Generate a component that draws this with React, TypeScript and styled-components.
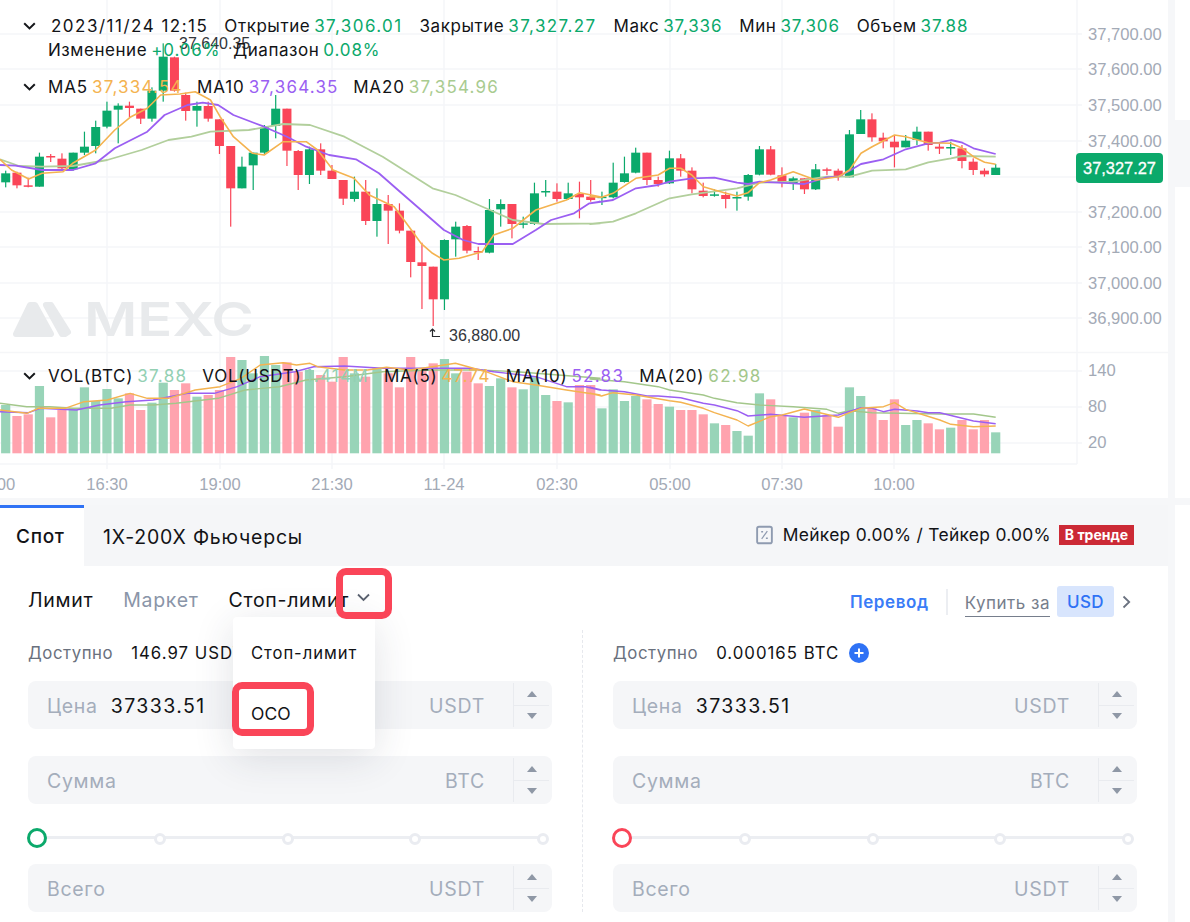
import React from 'react';
import styled, { createGlobalStyle } from 'styled-components';

const GREEN = '#0ba96b';
const RED = '#fa4558';
const MA5 = '#f4b350';
const MA10 = '#9b5ff2';
const MA20 = '#b2cf9c';

const GlobalStyle = createGlobalStyle`
  html, body { margin: 0; padding: 0; background: #fff; }
  body { font-family: Inter, "Noto Sans", "Liberation Sans", sans-serif; color: #121316; }
  * { box-sizing: border-box; }
`;

const Page = styled.div`
  width: 1190px;
  height: 922px;
  overflow: hidden;
  background: #fff;
  display: flex;
  flex-direction: column;
`;
const Band = styled.div`
  display: flex;
  height: ${(p: { $h: number }) => p.$h}px;
`;
const Strip = styled.div`
  height: 7px;
  flex: none;
  background: #f6f7f9;
`;
const Gutter = styled.div`
  width: 7px;
  flex: none;
  background: #f6f7f9;
`;
const SideBook = styled.div`
  flex: 1;
  padding-top: ${(p: { $top: number }) => p.$top}px;
`;
const SideRow = styled.div`
  height: 67px;
  background: #f6f7f9;
`;
const ChartPane = styled.div`
  width: 1168px;
  height: 498px;
  position: relative;
  overflow: hidden;
`;
const ChartSvg = styled.svg`
  display: block;
  width: 1168px;
  height: 498px;
`;
const AxisText = styled.text`
  font-family: "Liberation Sans", Arial, sans-serif;
  font-size: 16.6px;
  fill: #a3aab6;
  dominant-baseline: central;
`;
const MarkText = styled.text`
  font-family: "Liberation Sans", Arial, sans-serif;
  font-size: 16px;
  fill: #33363b;
  dominant-baseline: central;
`;
const WatermarkText = styled.text`
  font-family: Inter, "Liberation Sans", sans-serif;
  font-size: 47px;
  font-weight: 600;
  fill: #e8eaec;
`;
const LegendItem = styled.span`
  display: inline-flex;
  gap: 4px;
`;
const Legend = styled.div<{ $x: number; $y: number; $gap: number; $ls: number }>`
  position: absolute;
  display: flex;
  align-items: center;
  white-space: nowrap;
  font-size: 17px;
  letter-spacing: ${(p) => p.$ls}px;
  line-height: 24px;
  height: 24px;
  left: ${(p) => p.$x}px;
  top: ${(p) => p.$y}px;
  ${LegendItem} { margin-right: ${(p) => p.$gap}px; }
`;
const LegendDate = styled.span`
  margin: 0 16px 0 3px;
  letter-spacing: 1.5px;
`;
const LegendValue = styled.span<{ $c: string; $ls: number }>`
  color: ${(p) => p.$c};
  letter-spacing: ${(p) => p.$ls}px;
`;
const ChevronBox = styled.svg`
  width: 13px;
  height: 8px;
  margin-right: 12px;
  flex: none;
`;
const PriceTag = styled.div`
  position: absolute;
  left: 1076px;
  top: 153px;
  width: 87px;
  height: 30px;
  border-radius: 4px;
  background: ${GREEN};
  color: #fff;
  font-family: "Liberation Sans", Arial, sans-serif;
  font-size: 16.4px;
  -webkit-text-stroke: 0.3px #fff;
  display: flex;
  align-items: center;
  justify-content: center;
`;

const TradePane = styled.div`
  width: 1168px;
  position: relative;
  display: flex;
  flex-direction: column;
`;
const TabsBar = styled.div`
  height: 61px;
  flex: none;
  display: flex;
  align-items: center;
  background: #f5f6f8;
  padding-right: 34px;
`;
const ActiveTab = styled.div`
  width: 84px;
  height: 61px;
  background: #fff;
  border-top: 3px solid #2f72f5;
  font-size: 19px;
  font-weight: 500;
  letter-spacing: 0.7px;
  display: flex;
  align-items: center;
  padding-left: 16px;
  padding-bottom: 2px;
`;
const Tab = styled.div`
  margin-left: 19px;
  padding-top: 3px;
  font-size: 19.5px;
  letter-spacing: 0.8px;
`;
const FeeBox = styled.div`
  margin-left: auto;
  display: flex;
  align-items: center;
  font-size: 17.4px;
  letter-spacing: 0.3px;
  padding-bottom: 2px;
`;
const FeeIcon = styled.svg`
  width: 17px;
  height: 20px;
  margin-right: 10px;
`;
const TrendBadge = styled.span`
  margin-left: 8px;
  width: 75px;
  height: 20px;
  background: #cc2a36;
  color: #fff;
  font-size: 14px;
  font-weight: 700;
  letter-spacing: 0;
  display: flex;
  align-items: center;
  justify-content: center;
`;
const OrderRow = styled.div`
  height: 68px;
  flex: none;
  display: flex;
  align-items: center;
  padding: 0 37px 0 28px;
`;
const OrderType = styled.span<{ $dim?: boolean }>`
  font-size: 19.5px;
  letter-spacing: 0.7px;
  margin-right: 30px;
  color: ${(p) => (p.$dim ? '#8a95a8' : '#121316')};
`;
const DownIcon = styled.svg`
  width: 15px;
  height: 9px;
  margin-left: -23px;
  margin-bottom: 6px;
  color: #5b6270;
  position: relative;
`;
const RightTools = styled.div`
  margin-left: auto;
  margin-top: 3px;
  display: flex;
  align-items: center;
`;
const TransferLink = styled.span`
  color: #3a7cf7;
  font-size: 17px;
  font-weight: 600;
  letter-spacing: 0.6px;
  padding-right: 17px;
  border-right: 2px solid #eceef2;
  line-height: 26px;
  margin-right: 17px;
`;
const BuyFor = styled.span`
  color: #767e8c;
  font-size: 17px;
  letter-spacing: 0.5px;
  line-height: 26px;
  border-bottom: 1px solid #767e8c;
  margin-right: 7px;
  margin-top: 3px;
`;
const UsdChip = styled.span`
  width: 57px;
  height: 31px;
  background: #d8e5fd;
  color: #2f72f5;
  font-size: 17px;
  font-weight: 500;
  letter-spacing: 0.4px;
  border-radius: 3px;
  display: flex;
  align-items: center;
  justify-content: center;
`;
const RightIcon = styled.svg`
  width: 9px;
  height: 14px;
  margin-left: 8px;
  color: #6b7280;
`;
const FormGrid = styled.div`
  display: grid;
  grid-template-columns: 524px 61px 524px;
  padding-left: 28px;
`;
const Divider = styled.div`
  margin-left: 30px;
  margin-top: -4px;
  border-left: 1px dashed #e6e8ed;
`;
const BalanceRow = styled.div`
  height: 36px;
  padding-top: 1px;
  margin-bottom: 11px;
  display: flex;
  align-items: center;
  font-size: 16.8px;
  letter-spacing: 0.55px;
  white-space: nowrap;
`;
const BalanceLabel = styled.span`
  color: #6a717e;
  margin-right: 18px;
`;
const BalanceAmount = styled.span`
  letter-spacing: 1px;
`;
const PlusIcon = styled.svg`
  width: 20px;
  height: 20px;
  margin-left: 10px;
`;
const Field = styled.div`
  height: 48px;
  margin-bottom: ${(p: { $mb: number }) => p.$mb}px;
  border-radius: 8px;
  background: #f5f6f8;
  display: flex;
  align-items: center;
  padding-left: 19px;
  font-size: 19.5px;
  letter-spacing: 0.7px;
`;
const FieldLabel = styled.span`
  color: #a4adbb;
  margin-right: 13px;
  padding-top: 1px;
`;
const FieldValue = styled.span`
  color: #121316;
  letter-spacing: 1.4px;
  padding-top: 1px;
`;
const FieldUnit = styled.span`
  margin-left: auto;
  margin-right: 28px;
  color: #a4adbb;
  padding-top: 1px;
`;
const Stepper = styled.div`
  width: 39px;
  height: 44px;
  border-left: 1px solid #e9ebef;
  display: flex;
  flex-direction: column;
  padding-right: 3px;
`;
const StepCell = styled.div<{ $line?: boolean }>`
  flex: 1;
  display: flex;
  align-items: center;
  justify-content: center;
  border-bottom: ${(p) => (p.$line ? '1px solid #e9ebef' : 'none')};
`;
const StepArrow = styled.i<{ $up?: boolean }>`
  width: 0;
  height: 0;
  border-left: 5px solid transparent;
  border-right: 5px solid transparent;
  border-${(p) => (p.$up ? 'bottom' : 'top')}: 6px solid #8f98a6;
`;
const SliderRow = styled.div`
  height: 24px;
  margin: 22px 0 14px;
  padding-right: 3px;
  position: relative;
  display: flex;
  align-items: center;
  justify-content: space-between;
  &::before {
    content: '';
    position: absolute;
    left: 8px;
    right: 9px;
    top: 10px;
    height: 3px;
    background: #eceef2;
  }
`;
const Knob = styled.span<{ $c: string }>`
  width: 20px;
  height: 20px;
  border-radius: 50%;
  background: #fff;
  border: 3px solid ${(p) => p.$c};
  position: relative;
  margin-left: -1px;
  margin-right: -9px;
`;
const Dot = styled.span`
  width: 12px;
  height: 12px;
  border-radius: 50%;
  background: #fff;
  border: 3px solid #eaecf1;
  position: relative;
  margin-top: 1px;
`;
const Menu = styled.div`
  position: absolute;
  left: 233px;
  top: 112px;
  width: 142px;
  height: 132px;
  border-radius: 4px;
  background: #fff;
  box-shadow: 0 8px 40px rgba(40, 50, 70, 0.14);
  padding-left: 18px;
`;
const MenuItem = styled.div<{ $big?: boolean }>`
  height: 60px;
  display: flex;
  align-items: center;
  font-size: ${(p) => (p.$big ? 17.5 : 16.6)}px;
  letter-spacing: ${(p) => (p.$big ? 0 : 0.95)}px;
  &:first-child { margin-top: 6px; }
`;
const Highlight = styled.div<{ $x: number; $y: number; $w: number; $h: number }>`
  position: absolute;
  left: ${(p) => p.$x}px;
  top: ${(p) => p.$y}px;
  width: ${(p) => p.$w}px;
  height: ${(p) => p.$h}px;
  border: 7px solid ${RED};
  border-radius: 10px;
`;

type C = [number, number, number, number, 'g' | 'r'];
const candles: C[] = [
  [520, 547, 512, 562, 'g'], [518, 556, 515, 565, 'r'], [556, 560, 533, 562, 'r'], [470, 560, 458, 560, 'g'],
  [468, 472, 462, 486, 'r'], [476, 505, 460, 510, 'r'], [458, 508, 458, 512, 'g'], [440, 458, 395, 465, 'g'],
  [381, 438, 362, 460, 'g'], [332, 380, 305, 385, 'g'], [317, 329, 310, 430, 'g'], [317, 324, 305, 352, 'r'],
  [326, 356, 326, 372, 'r'], [272, 356, 262, 365, 'g'], [170, 272, 130, 305, 'g'], [172, 272, 170, 275, 'r'],
  [285, 333, 278, 362, 'r'], [318, 332, 305, 380, 'g'], [318, 356, 305, 365, 'r'], [358, 438, 358, 462, 'r'],
  [438, 565, 438, 680, 'r'], [500, 565, 470, 565, 'g'], [458, 496, 458, 570, 'g'], [382, 458, 375, 465, 'g'],
  [326, 378, 285, 415, 'g'], [326, 452, 326, 498, 'r'], [453, 525, 450, 570, 'r'], [448, 525, 440, 552, 'g'],
  [448, 512, 430, 525, 'r'], [512, 537, 495, 537, 'r'], [540, 596, 540, 615, 'r'], [575, 597, 530, 605, 'g'],
  [575, 663, 540, 675, 'r'], [612, 663, 565, 710, 'g'], [612, 632, 585, 732, 'r'], [632, 692, 610, 700, 'r'],
  [692, 786, 692, 832, 'r'], [787, 798, 728, 927, 'r'], [800, 898, 800, 978, 'r'], [720, 898, 718, 930, 'g'],
  [680, 718, 665, 770, 'g'], [678, 752, 675, 760, 'r'], [753, 757, 740, 780, 'r'], [630, 758, 597, 760, 'g'],
  [612, 628, 598, 680, 'g'], [612, 672, 612, 715, 'r'], [670, 674, 650, 685, 'g'], [580, 672, 548, 675, 'g'],
  [573, 577, 540, 590, 'g'], [575, 597, 550, 605, 'r'], [580, 597, 548, 600, 'g'], [582, 592, 545, 655, 'r'],
  [590, 600, 540, 605, 'r'], [590, 594, 575, 615, 'g'], [548, 592, 488, 595, 'g'], [520, 546, 470, 548, 'g'],
  [458, 518, 443, 520, 'g'], [458, 540, 458, 555, 'r'], [540, 552, 530, 560, 'r'], [475, 550, 452, 552, 'g'],
  [475, 512, 462, 530, 'r'], [512, 568, 502, 580, 'r'], [572, 588, 548, 592, 'r'], [583, 587, 568, 590, 'g'],
  [585, 597, 575, 625, 'r'], [591, 595, 575, 632, 'g'], [525, 590, 522, 602, 'g'], [448, 524, 438, 526, 'g'],
  [448, 524, 438, 526, 'r'], [526, 548, 502, 562, 'r'], [535, 552, 530, 570, 'g'], [535, 568, 535, 582, 'r'],
  [508, 568, 492, 570, 'g'], [508, 512, 503, 525, 'r'], [512, 530, 506, 542, 'r'], [403, 532, 390, 532, 'g'],
  [358, 402, 330, 402, 'g'], [358, 412, 340, 425, 'r'], [413, 424, 398, 445, 'r'], [425, 442, 405, 502, 'r'],
  [422, 442, 405, 442, 'g'], [395, 420, 380, 435, 'g'], [395, 435, 395, 452, 'r'], [440, 446, 430, 462, 'r'],
  [441, 445, 425, 465, 'g'], [445, 483, 435, 505, 'r'], [485, 510, 475, 525, 'r'], [512, 523, 505, 530, 'r'],
  [503, 525, 492, 525, 'g'],
];
const volTops = [
  525, 558, 553, 468, 562, 540, 535, 472, 513, 477, 505, 490, 540, 518, 458, 480, 460, 500, 495, 480,
  381, 390, 430, 378, 405, 397, 425, 420, 435, 455, 381, 430, 440, 415, 430, 472, 381, 420, 400, 387,
  430, 425, 460, 468, 445, 472, 478, 442, 495, 513, 517, 465, 465, 535, 478, 513, 498, 508, 522, 530,
  540, 540, 553, 580, 585, 603, 617, 490, 508, 555, 562, 548, 540, 555, 590, 472, 498, 535, 570, 508,
  585, 570, 580, 598, 593, 570, 598, 570, 607,
];
type P = [number, number];
const X = (i: number) => 5.7 + 11.25 * i;
const pts = (left: P[], right: P[], yOff: number) =>
  [...left.map(([x, y]) => [x / 2.613, y / 3 + yOff]), ...right.map(([x, y]) => [590 + x / 2.613, y / 3 + yOff])]
    .map(([x, y]) => `${x.toFixed(1)},${y.toFixed(1)}`)
    .join(' ');

const ma5 = pts(
  [[0, 478], [30, 510], [75, 537], [110, 520], [165, 515], [190, 490], [250, 450], [300, 390], [340, 352], [385, 325], [420, 285], [470, 282], [510, 275], [550, 300], [575, 350], [610, 410], [660, 460], [690, 465], [740, 425], [800, 425], [830, 450], [870, 510], [925, 535], [965, 585], [1030, 620], [1075, 690], [1100, 730], [1130, 760], [1160, 780], [1200, 775], [1260, 755], [1290, 705], [1340, 685], [1400, 630], [1480, 600], [1515, 578], [1568, 590]],
  [[0, 590], [30, 592], [60, 580], [120, 535], [178, 525], [208, 505], [237, 505], [266, 525], [296, 560], [355, 580], [384, 588], [413, 578], [443, 548], [472, 540], [531, 515], [590, 540], [649, 530], [678, 510], [708, 460], [737, 440], [796, 405], [825, 410], [884, 428], [943, 430], [973, 445], [1002, 470], [1031, 487], [1060, 493]],
  0,
);
const ma10 = pts(
  [[0, 495], [40, 497], [110, 510], [190, 510], [250, 490], [300, 445], [385, 395], [430, 345], [490, 315], [530, 308], [570, 315], [610, 345], [690, 380], [750, 410], [800, 440], [860, 465], [930, 478], [990, 520], [1040, 570], [1100, 630], [1160, 690], [1210, 720], [1250, 732], [1340, 732], [1400, 690], [1440, 660], [1500, 640], [1540, 610], [1568, 605]],
  [[0, 610], [60, 600], [120, 565], [178, 555], [208, 545], [266, 535], [325, 533], [384, 548], [413, 552], [443, 545], [531, 550], [560, 552], [619, 532], [649, 530], [678, 512], [708, 492], [767, 478], [825, 448], [884, 430], [914, 428], [943, 420], [973, 428], [1002, 445], [1060, 462]],
  0,
);
const ma20 = pts(
  [[0, 478], [50, 498], [110, 500], [190, 498], [280, 480], [370, 450], [440, 420], [500, 410], [550, 395], [650, 390], [740, 372], [810, 375], [900, 410], [1000, 470], [1130, 565], [1190, 585], [1280, 630], [1340, 660], [1420, 672], [1568, 670]],
  [[0, 672], [60, 665], [120, 640], [208, 595], [266, 583], [384, 565], [443, 548], [531, 545], [619, 530], [678, 530], [737, 512], [825, 508], [884, 487], [943, 475], [973, 468], [1060, 470]],
  0,
);
const vma5 = pts(
  [[0, 540], [70, 550], [100, 535], [170, 535], [220, 515], [280, 510], [340, 490], [385, 505], [440, 505], [510, 480], [575, 470], [630, 445], [680, 405], [740, 398], [775, 405], [810, 400], [830, 410], [900, 420], [960, 420], [1010, 412], [1070, 420], [1130, 410], [1190, 400], [1270, 425], [1340, 455], [1400, 465], [1480, 480], [1568, 495]],
  [[0, 490], [30, 498], [60, 488], [120, 495], [208, 512], [237, 517], [296, 535], [325, 548], [384, 570], [413, 588], [472, 560], [502, 555], [560, 537], [649, 562], [678, 548], [708, 535], [767, 530], [796, 518], [825, 538], [914, 570], [943, 583], [1002, 590], [1060, 588]],
  230,
);
const vma10 = pts(
  [[0, 545], [75, 548], [105, 535], [200, 540], [260, 525], [330, 515], [400, 510], [490, 490], [560, 490], [620, 470], [680, 440], [770, 425], [820, 410], [900, 408], [1000, 415], [1230, 415], [1290, 425], [1400, 440], [1480, 470], [1530, 470], [1568, 480]],
  [[0, 472], [30, 480], [90, 485], [149, 498], [178, 498], [237, 503], [296, 520], [325, 525], [384, 542], [413, 558], [472, 553], [560, 562], [649, 555], [708, 533], [737, 535], [767, 545], [796, 538], [855, 543], [884, 548], [914, 548], [1002, 573], [1060, 581]],
  230,
);
const vma20 = pts(
  [[0, 520], [70, 530], [130, 530], [190, 535], [290, 535], [340, 525], [400, 525], [460, 520], [570, 505], [640, 480], [730, 470], [800, 450], [900, 440], [1000, 425], [1130, 420], [1250, 420], [1350, 425], [1568, 445]],
  [[0, 447], [90, 455], [178, 470], [208, 480], [296, 495], [325, 505], [384, 518], [443, 525], [531, 530], [619, 538], [649, 550], [678, 542], [737, 548], [914, 552], [1002, 552], [1060, 562]],
  230,
);

const gridY = [34, 69, 105, 141, 177, 212, 247, 283, 318, 371, 407, 443];
const gridX = [107, 220, 332, 444, 557, 670, 782, 894];
const prices: [string, number][] = [
  ['37,700.00', 34], ['37,600.00', 69], ['37,500.00', 105], ['37,400.00', 141], ['37,200.00', 212],
  ['37,100.00', 247], ['37,000.00', 283], ['36,900.00', 318], ['140', 370], ['80', 406], ['20', 442],
];
const times: [string, number][] = [
  ['14:00', -5.5], ['16:30', 107], ['19:00', 220], ['21:30', 332], ['11-24', 444], ['02:30', 557], ['05:00', 670], ['07:30', 782], ['10:00', 894],
];

const Chevron = () => (
  <ChevronBox viewBox="0 0 13 8">
    <polyline points="1.2,1.2 6.5,6.4 11.8,1.2" fill="none" stroke="#15171a" strokeWidth="2" />
  </ChevronBox>
);

const Chart = () => (
  <ChartSvg viewBox="0 0 1168 498">
    <g stroke="#f5f6f8" strokeWidth="1.5">
      {gridY.map((y) => <line key={y} x1="0" x2="1082" y1={y} y2={y} />)}
      {gridX.map((x) => <line key={x} x1={x} x2={x} y1="0" y2="469" />)}
      <line x1="0" x2="1168" y1="352.5" y2="352.5" />
      <line x1="0" x2="1077" y1="464" y2="464" />
      <line x1="1077" x2="1077" y1="0" y2="464" />
    </g>
    <g fill="#e8eaec" stroke="#e8eaec" strokeWidth="6" strokeLinejoin="round">
      <polygon points="30,305 35,305 51,334 16,334" />
      <polygon points="46,305 51,305 68,332 65,334 62,334" />
    </g>
    <WatermarkText x="84" y="336" textLength="170" lengthAdjust="spacingAndGlyphs">MEXC</WatermarkText>
    {volTops.map((t, i) => (
      <rect
        key={i}
        x={X(i) - 4.6}
        y={230 + t / 3}
        width="9.2"
        height={223.3 - t / 3}
        fill={candles[i][4] === 'g' ? '#98d4b8' : '#ffa3ae'}
      />
    ))}
    {candles.map(([t, b, wt, wb, c], i) => {
      const col = c === 'g' ? GREEN : RED;
      return (
        <g key={i} fill={col}>
          <rect x={X(i) - 0.6} y={wt / 3} width="1.2" height={(wb - wt) / 3} />
          <rect x={X(i) - 4.5} y={t / 3} width="9" height={Math.max((b - t) / 3, 1.5)} />
        </g>
      );
    })}
    <g fill="none" strokeWidth="1.8" strokeLinejoin="round">
      <polyline points={ma20} stroke={MA20} />
      <polyline points={ma10} stroke={MA10} />
      <polyline points={ma5} stroke={MA5} strokeWidth="1.6" />
    </g>
    <g fill="none" strokeWidth="1.4" strokeLinejoin="round">
      <polyline points={vma20} stroke="#a3c78b" />
      <polyline points={vma10} stroke={MA10} />
      <polyline points={vma5} stroke={MA5} />
    </g>
    <MarkText x="179" y="43">37,640.35</MarkText>
    <MarkText x="449" y="335">36,880.00</MarkText>
    <path d="M432.5 329V336.5H440M430 331.5L432.5 329L435 331.5" fill="none" stroke="#26282c" strokeWidth="1.2" />
    {prices.map(([t, y]) => <AxisText key={t} x="1088" y={y}>{t}</AxisText>)}
    {times.map(([t, x]) => <AxisText key={t} x={x} y="484" textAnchor="middle">{t}</AxisText>)}
  </ChartSvg>
);

const ChartLegends = () => (
  <>
    <Legend $x={23} $y={14} $gap={17} $ls={0.55}>
      <Chevron />
      <LegendDate>2023/11/24 12:15</LegendDate>
      <LegendItem>Открытие<LegendValue $c={GREEN} $ls={1.4}>37,306.01</LegendValue></LegendItem>
      <LegendItem>Закрытие<LegendValue $c={GREEN} $ls={1.4}>37,327.27</LegendValue></LegendItem>
      <LegendItem>Макс<LegendValue $c={GREEN} $ls={0.85}>37,336</LegendValue></LegendItem>
      <LegendItem>Мин<LegendValue $c={GREEN} $ls={0.85}>37,306</LegendValue></LegendItem>
      <LegendItem>Объем<LegendValue $c={GREEN} $ls={0.85}>37.88</LegendValue></LegendItem>
    </Legend>
    <Legend $x={48} $y={38} $gap={13} $ls={0.55}>
      <LegendItem>Изменение<LegendValue $c={GREEN} $ls={0.85}>+0.06%</LegendValue></LegendItem>
      <LegendItem>Диапазон<LegendValue $c={GREEN} $ls={0.85}>0.08%</LegendValue></LegendItem>
    </Legend>
    <Legend $x={23} $y={75} $gap={14.5} $ls={0.85}>
      <Chevron />
      <LegendItem>MA5<LegendValue $c={MA5} $ls={1.2}>37,334.54</LegendValue></LegendItem>
      <LegendItem>MA10<LegendValue $c={MA10} $ls={1.2}>37,364.35</LegendValue></LegendItem>
      <LegendItem>MA20<LegendValue $c="#a9cb8f" $ls={1.2}>37,354.96</LegendValue></LegendItem>
    </Legend>
    <Legend $x={23} $y={364} $gap={15} $ls={0.75}>
      <Chevron />
      <LegendItem>VOL(BTC)<LegendValue $c="#93d0b3" $ls={1.3}>37.88</LegendValue></LegendItem>
      <LegendItem>VOL(USDT)<LegendValue $c="#93d0b3" $ls={1.3}>1.414M</LegendValue></LegendItem>
      <LegendItem>MA(5)<LegendValue $c={MA5} $ls={1.3}>47.74</LegendValue></LegendItem>
      <LegendItem>MA(10)<LegendValue $c={MA10} $ls={1.3}>52.83</LegendValue></LegendItem>
      <LegendItem>MA(20)<LegendValue $c="#a3c78b" $ls={1.3}>62.98</LegendValue></LegendItem>
    </Legend>
  </>
);

const InputField = ({ label, value, unit, mb }: { label: string; value?: string; unit: string; mb: number }) => (
  <Field $mb={mb}>
    <FieldLabel>{label}</FieldLabel>
    {value && <FieldValue>{value}</FieldValue>}
    <FieldUnit>{unit}</FieldUnit>
    <Stepper>
      <StepCell $line><StepArrow $up /></StepCell>
      <StepCell><StepArrow /></StepCell>
    </Stepper>
  </Field>
);

const Column = ({ color, balance, plus }: { color: string; balance: string; plus?: boolean }) => (
  <div>
    <BalanceRow>
      <BalanceLabel>Доступно</BalanceLabel>
      <BalanceAmount>{balance}</BalanceAmount>
      {plus && (
        <PlusIcon viewBox="0 0 20 20">
          <circle cx="10" cy="10" r="10" fill="#2f72f5" />
          <path d="M10 5.5V14.5M5.5 10H14.5" stroke="#fff" strokeWidth="2" />
        </PlusIcon>
      )}
    </BalanceRow>
    <InputField label="Цена" value="37333.51" unit="USDT" mb={27} />
    <InputField label="Сумма" unit="BTC" mb={0} />
    <SliderRow>
      <Knob $c={color} />
      <Dot /><Dot /><Dot /><Dot />
    </SliderRow>
    <InputField label="Всего" unit="USDT" mb={0} />
  </div>
);

export default function App() {
  return (
    <Page>
      <GlobalStyle />
      <Band $h={498}>
        <ChartPane>
          <Chart />
          <ChartLegends />
          <PriceTag>37,327.27</PriceTag>
        </ChartPane>
        <Gutter />
        <SideBook $top={120}><SideRow /></SideBook>
      </Band>
      <Strip />
      <Band $h={417}>
        <TradePane>
          <TabsBar>
            <ActiveTab>Спот</ActiveTab>
            <Tab>1X-200X Фьючерсы</Tab>
            <FeeBox>
              <FeeIcon viewBox="0 0 18 20">
                <rect x="1.2" y="1.2" width="15.6" height="17.6" rx="2" fill="none" stroke="#8f9bb0" strokeWidth="2" />
                <path d="M12 6L6 14" stroke="#8f9bb0" strokeWidth="1.3" />
                <path d="M5.5 6.5h2M10.5 13.5h2" stroke="#8f9bb0" strokeWidth="1.6" />
              </FeeIcon>
              Мейкер 0.00% / Тейкер 0.00%
              <TrendBadge>В тренде</TrendBadge>
            </FeeBox>
          </TabsBar>
          <OrderRow>
            <OrderType>Лимит</OrderType>
            <OrderType $dim>Маркет</OrderType>
            <OrderType>Стоп-лимит</OrderType>
            <DownIcon viewBox="0 0 15 9">
              <polyline points="2,1.5 7.5,7 13,1.5" fill="none" stroke="currentColor" strokeWidth="1.8" />
            </DownIcon>
            <RightTools>
              <TransferLink>Перевод</TransferLink>
              <BuyFor>Купить за</BuyFor>
              <UsdChip>USD</UsdChip>
              <RightIcon viewBox="0 0 9 14">
                <polyline points="1.5,1.5 7.2,7 1.5,12.5" fill="none" stroke="currentColor" strokeWidth="1.8" />
              </RightIcon>
            </RightTools>
          </OrderRow>
          <FormGrid>
            <Column color={GREEN} balance="146.97 USDT" />
            <Divider />
            <Column color={RED} balance="0.000165 BTC" plus />
          </FormGrid>
          <Menu>
            <MenuItem>Стоп-лимит</MenuItem>
            <MenuItem $big>ОСО</MenuItem>
          </Menu>
          <Highlight $x={336} $y={63} $w={56} $h={51} />
          <Highlight $x={232} $y={177} $w={82} $h={54} />
        </TradePane>
        <Gutter />
        <SideBook $top={0} />
      </Band>
    </Page>
  );
}
